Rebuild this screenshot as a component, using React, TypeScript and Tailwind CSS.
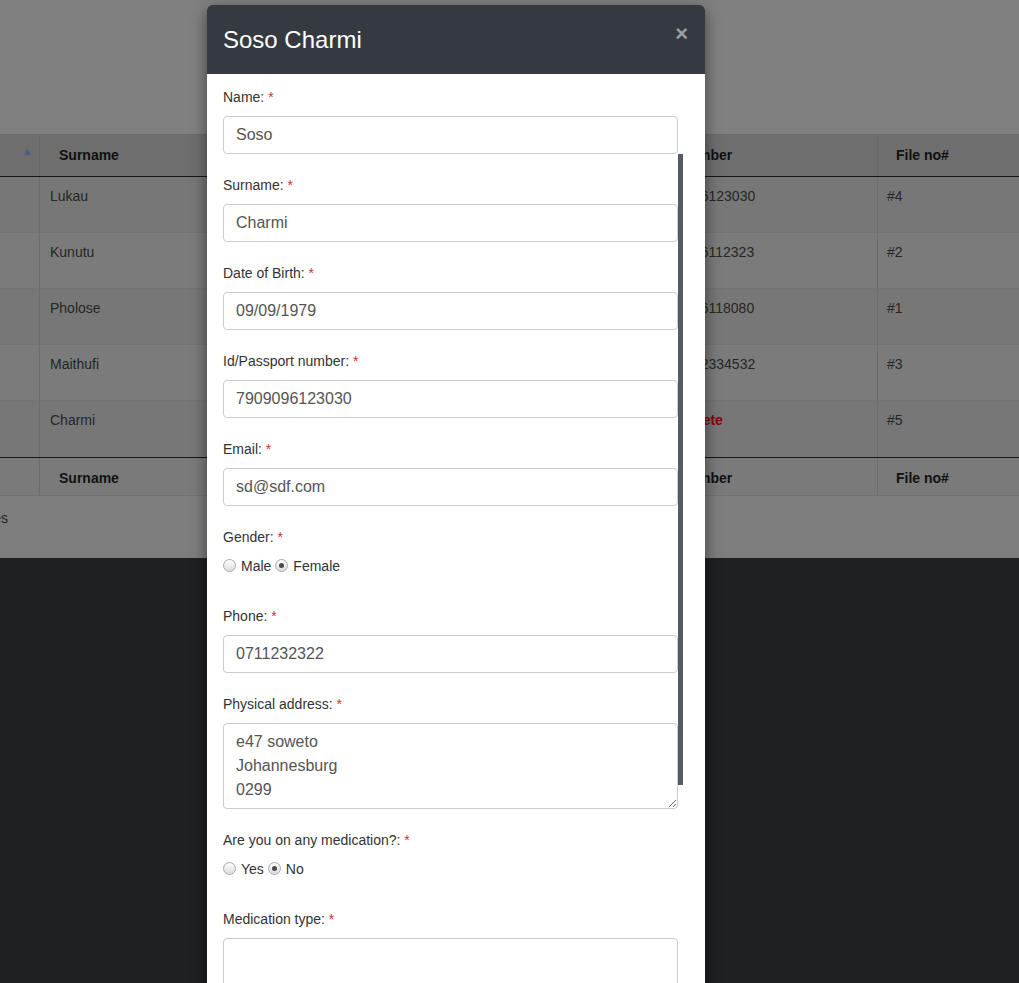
import { ReactNode } from 'react';

type Row = { surname: string; id: string; file: string; idClass?: string };

const rows: Row[] = [
  { surname: 'Lukau', id: '7909096123030', file: '#4' },
  { surname: 'Kunutu', id: '8505056112323', file: '#2' },
  { surname: 'Pholose', id: '9001016118080', file: '#1' },
  { surname: 'Maithufi', id: '8812122334532', file: '#3' },
  { surname: 'Charmi', id: 'Incomplete', file: '#5', idClass: 'pl-[5px] font-bold text-[#8b0000]' },
];

const grid = 'grid grid-cols-[239px_204px_400px_234px_142px]';

function BackgroundTable() {
  return (
    <div className="h-[558px] bg-[#808080] text-sm">
      <div className="h-[134px]" />
      <div className="-ml-[200px] w-[1219px]">
        <div className={`${grid} h-[43px] bg-[#6e6e6e] border-b border-[#161616] font-bold text-[#111]`}>
          <div className="flex items-start justify-end pr-[8px] pt-[15px]">
            <svg width="7" height="6" viewBox="0 0 7 6"><path d="M0 6 L3.5 0 L7 6 Z" fill="#4c5a86" /></svg>
          </div>
          <div className="border-l border-[#686868] pl-[19px] flex items-center">Surname</div>
          <div className="border-l border-[#686868] pl-[19px] flex items-center">Name</div>
          <div className="border-l border-[#686868] pl-[19px] flex items-center">ID number</div>
          <div className="border-l border-[#686868] pl-[18px] flex items-center">File no#</div>
        </div>
        {rows.map((r, i) => (
          <div
            key={r.file}
            className={`${grid} h-[56px] text-[#262626] ${i < rows.length - 1 ? 'border-b border-[#737373]' : ''} ${i % 2 === 0 ? 'bg-[#777777]' : 'bg-[#7b7b7b]'}`}
          >
            <div />
            <div className="border-l border-[#6c6c6c] px-[10px] pt-[9px] leading-5">{r.surname}</div>
            <div className="border-l border-[#6c6c6c] px-[10px] pt-[9px] leading-5" />
            <div className={`border-l border-[#6c6c6c] px-[10px] pt-[9px] leading-5 ${r.idClass ?? ''}`}>{r.id}</div>
            <div className="border-l border-[#6c6c6c] px-[9px] pt-[9px] leading-5">{r.file}</div>
          </div>
        ))}
        <div className={`${grid} h-[39px] bg-[#7a7a7a] border-t border-[#161616] border-b border-b-[#727272] font-bold text-[#111]`}>
          <div />
          <div className="border-l border-[#6c6c6c] pl-[19px] pt-[2px] flex items-center">Surname</div>
          <div className="border-l border-[#6c6c6c] pl-[19px] pt-[2px] flex items-center">Name</div>
          <div className="border-l border-[#6c6c6c] pl-[19px] pt-[2px] flex items-center">ID number</div>
          <div className="border-l border-[#6c6c6c] pl-[18px] pt-[2px] flex items-center">File no#</div>
        </div>
        <div className="h-[62px] bg-[#7d7d7d] text-[#222] pt-[12px]">
          <div className="w-[208px] text-right leading-5">Showing 1 to 5 of 5 entries</div>
        </div>
      </div>
    </div>
  );
}

function Label({ children }: { children: ReactNode }) {
  return (
    <div className="mb-[9px] text-sm leading-5 text-[#333]">
      {children} <span className="text-[#e0282f]">*</span>
    </div>
  );
}

function Field({ label, value }: { label: string; value: string }) {
  return (
    <div className="mb-[21px]">
      <Label>{label}</Label>
      <input
        readOnly
        value={value}
        className="block h-[38px] w-full rounded border border-[#cccccc] bg-white px-3 py-[6px] text-base leading-6 text-[#555] outline-none"
      />
    </div>
  );
}

function Radio({ checked, label }: { checked?: boolean; label: string }) {
  return (
    <span className="flex items-center">
      <span className="mb-[2px] mr-[5px] flex h-[13px] w-[13px] items-center justify-center rounded-full border border-[#a9a9a9] bg-gradient-to-b from-[#fdfdfd] to-[#dcdcdc]">
        {checked && <span className="h-[5px] w-[5px] rounded-full bg-[#4a4a4a]" />}
      </span>
      <span className="mr-[4px]">{label}</span>
    </span>
  );
}

function RadioGroup({ label, options, value }: { label: string; options: string[]; value: string }) {
  return (
    <div className="mb-[30px]">
      <Label>{label}</Label>
      <div className="flex h-5 items-center text-sm text-[#333]">
        {options.map(o => <Radio key={o} label={o} checked={o === value} />)}
      </div>
    </div>
  );
}

function PatientModal() {
  return (
    <div className="absolute left-[207px] top-[5px] w-[498px] overflow-hidden rounded-t-[5px] bg-white shadow-[0_5px_15px_rgba(0,0,0,0.5)]">
      <div className="flex h-[69px] items-start justify-between bg-[#343a40] pl-4 pr-[17px]">
        <h4 className="pt-[21px] text-[24px] leading-[28px] text-white">Soso Charmi</h4>
        <span className="pt-[18px] text-[22px] font-bold leading-[21px] text-[#9b9ea2]">×</span>
      </div>
      <div className="relative pl-4 pr-[27px] pt-[13px] pb-10">
        <Field label="Name:" value="Soso" />
        <Field label="Surname:" value="Charmi" />
        <Field label="Date of Birth:" value="09/09/1979" />
        <Field label="Id/Passport number:" value="7909096123030" />
        <Field label="Email:" value="sd@sdf.com" />
        <RadioGroup label="Gender:" options={['Male', 'Female']} value="Female" />
        <Field label="Phone:" value="0711232322" />
        <div className="mb-[21px]">
          <Label>Physical address:</Label>
          <textarea
            readOnly
            rows={3}
            value={'e47 soweto\nJohannesburg\n0299'}
            className="block h-[86px] w-full rounded border border-[#cccccc] bg-white px-3 py-[6px] text-base leading-6 text-[#555] outline-none"
          />
        </div>
        <RadioGroup label="Are you on any medication?:" options={['Yes', 'No']} value="No" />
        <div>
          <Label>Medication type:</Label>
          <textarea
            readOnly
            rows={3}
            className="block h-[86px] w-full rounded border border-[#cccccc] bg-white px-3 py-[6px] text-base leading-6 text-[#555] outline-none"
          />
        </div>
        {/* custom scrollbar thumb */}
        <div className="absolute left-[471px] top-[80px] h-[631px] w-[5px] bg-[#555b65]" />
      </div>
    </div>
  );
}

export default function App() {
  return (
    <div className="relative h-[983px] w-[1019px] overflow-hidden bg-[#1d2124] font-['Liberation_Sans',Arial,sans-serif]">
      <BackgroundTable />
      <PatientModal />
    </div>
  );
}
